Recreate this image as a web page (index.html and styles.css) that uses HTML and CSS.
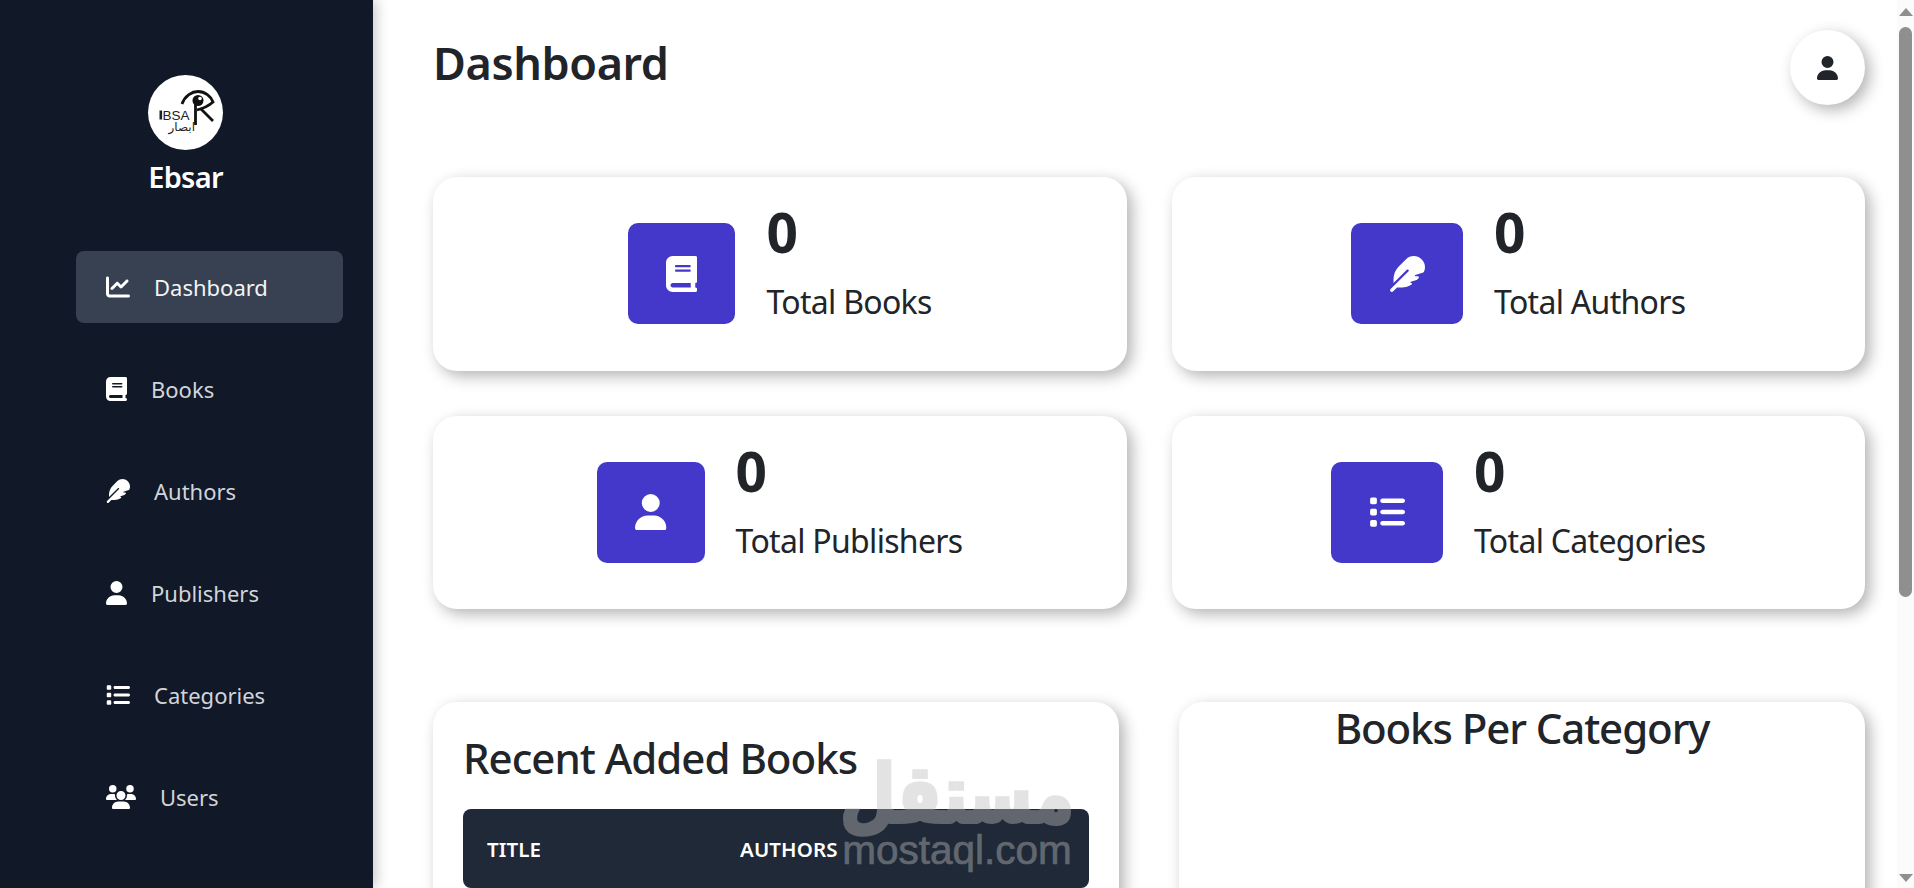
FILE: index.html
```html
<!DOCTYPE html>
<html>
    <head>
        <title>Ebsar Dashboard</title>
        <meta name="viewport" content="width=device-width, initial-scale=1.0">
        <link rel="stylesheet" href="styles.css">
    </head>
    <body>
    <!-- icon set, used with <use> below -->
    <svg class="icon-defs" aria-hidden="true">
        <symbol id="i-chart" viewBox="0 0 512 512"><path d="M64 64c0-17.7-14.3-32-32-32S0 46.3 0 64V400c0 44.2 35.8 80 80 80H480c17.7 0 32-14.3 32-32s-14.3-32-32-32H80c-8.8 0-16-7.2-16-16V64zm406.6 86.6c12.5-12.5 12.5-32.8 0-45.3s-32.8-12.5-45.3 0L320 210.7l-57.4-57.4c-12.5-12.5-32.8-12.5-45.3 0l-112 112c-12.5 12.5-12.5 32.8 0 45.3s32.8 12.5 45.3 0L240 221.3l57.4 57.4c12.5 12.5 32.8 12.5 45.3 0l128-128z"/></symbol>
        <symbol id="i-book" viewBox="0 0 448 512"><path d="M96 0C43 0 0 43 0 96V416c0 53 43 96 96 96H384h32c17.7 0 32-14.3 32-32s-14.3-32-32-32V384c17.7 0 32-14.3 32-32V32c0-17.7-14.3-32-32-32H384 96zm0 384H352v64H96c-17.7 0-32-14.3-32-32s14.3-32 32-32zm32-240c0-8.8 7.2-16 16-16H336c8.8 0 16 7.2 16 16s-7.2 16-16 16H144c-8.8 0-16-7.2-16-16zm16 48H336c8.8 0 16 7.2 16 16s-7.2 16-16 16H144c-8.8 0-16-7.2-16-16s7.2-16 16-16z"/></symbol>
        <symbol id="i-feather" viewBox="0 0 512 512"><path d="M278.5 215.6L23 471c-9.4 9.4-9.4 24.6 0 33.9s24.6 9.4 33.9 0l57-57h68c49.7 0 97.9-14.4 139-41c11.1-7.2 5.5-23-7.8-23c-5.1 0-9.2-4.1-9.2-9.2c0-4.1 2.7-7.6 6.5-8.8l81-24.3c2.5-.8 4.8-2.1 6.7-4l22.4-22.4c10.1-10.1 2.9-27.3-11.3-27.3l-32.2 0c-5.1 0-9.2-4.1-9.2-9.2c0-4.1 2.7-7.6 6.5-8.8l112-33.6c4-1.2 7.4-3.9 9.3-7.7C506.4 207.6 512 184.1 512 160c0-41-16.3-80.3-45.3-109.3l-5.5-5.5C432.3 16.3 393 0 352 0s-80.3 16.3-109.3 45.3L139 149C91 197 64 262.1 64 330v55.3L253.6 195.8c6.2-6.2 16.4-6.2 22.6 0c5.4 5.4 6.1 13.6 2.2 19.8z"/></symbol>
        <symbol id="i-user" viewBox="0 0 448 512"><path d="M224 256A128 128 0 1 0 224 0a128 128 0 1 0 0 256zm-45.7 48C79.8 304 0 383.8 0 482.3C0 498.7 13.3 512 29.7 512H418.3c16.4 0 29.7-13.3 29.7-29.7C448 383.8 368.2 304 269.7 304H178.3z"/></symbol>
        <symbol id="i-list" viewBox="0 0 512 512"><path d="M40 48C26.7 48 16 58.7 16 72v48c0 13.3 10.7 24 24 24H88c13.3 0 24-10.7 24-24V72c0-13.3-10.7-24-24-24H40zM192 64c-17.7 0-32 14.3-32 32s14.3 32 32 32H480c17.7 0 32-14.3 32-32s-14.3-32-32-32H192zm0 160c-17.7 0-32 14.3-32 32s14.3 32 32 32H480c17.7 0 32-14.3 32-32s-14.3-32-32-32H192zm0 160c-17.7 0-32 14.3-32 32s14.3 32 32 32H480c17.7 0 32-14.3 32-32s-14.3-32-32-32H192zM16 232v48c0 13.3 10.7 24 24 24H88c13.3 0 24-10.7 24-24V232c0-13.3-10.7-24-24-24H40c-13.3 0-24 10.7-24 24zM40 368c-13.3 0-24 10.7-24 24v48c0 13.3 10.7 24 24 24H88c13.3 0 24-10.7 24-24V392c0-13.3-10.7-24-24-24H40z"/></symbol>
        <symbol id="i-users" viewBox="0 0 640 512"><path d="M144 0a80 80 0 1 1 0 160A80 80 0 1 1 144 0zM512 0a80 80 0 1 1 0 160A80 80 0 1 1 512 0zM0 298.7C0 239.8 47.8 192 106.7 192h42.7c15.9 0 31 3.5 44.6 9.7c-1.3 7.2-1.9 14.7-1.9 22.3c0 38.2 16.8 72.5 43.3 96c-.2 0-.4 0-.7 0H21.3C9.6 320 0 310.4 0 298.7zM405.3 320c-.2 0-.4 0-.7 0c26.6-23.5 43.3-57.8 43.3-96c0-7.6-.7-15-1.9-22.3c13.6-6.3 28.7-9.7 44.6-9.7h42.7C592.2 192 640 239.8 640 298.7c0 11.8-9.6 21.3-21.3 21.3H405.3zM224 224a96 96 0 1 1 192 0 96 96 0 1 1 -192 0zM128 485.3C128 411.7 187.7 352 261.3 352H378.7C452.3 352 512 411.7 512 485.3c0 14.7-11.9 26.7-26.7 26.7H154.7c-14.7 0-26.7-11.9-26.7-26.7z"/></symbol>
    </svg>

    <div class="app">
        <aside class="sidebar">
            <div class="brand">
                <svg class="brand-logo" viewBox="0 0 75 75">
                    <circle cx="37.5" cy="37.5" r="37.5" fill="#fff"/>
                    <rect x="11.500" y="35.500" width="2.600" height="9" fill="#222"/>
                    <text class="logo-latin" x="14.500" y="44.500">BSA</text>
                    <text class="logo-arabic" x="47" y="56" text-anchor="end">ابصار</text>
                    <path d="M34 29C37 20.500 44 16.500 50 16.500C57 16.500 63 21.500 65 27C60 31.500 55 33.500 49 35" fill="none" stroke="#111" stroke-width="2.800"/>
                    <path d="M47.500 27V50M53 34L65 46" fill="none" stroke="#111" stroke-width="2.800"/>
                    <circle cx="50" cy="25.500" r="5.500" fill="#111"/>
                    <circle cx="52" cy="23.500" r="1.800" fill="#fff"/>
                </svg>
                <h2 class="brand-name">Ebsar</h2>
            </div>
            <nav class="nav">
                <a class="nav-item active"><svg class="nav-icon w24"><use href="#i-chart"/></svg>Dashboard</a>
                <a class="nav-item"><svg class="nav-icon w21"><use href="#i-book"/></svg>Books</a>
                <a class="nav-item"><svg class="nav-icon w24"><use href="#i-feather"/></svg>Authors</a>
                <a class="nav-item"><svg class="nav-icon w21"><use href="#i-user"/></svg>Publishers</a>
                <a class="nav-item"><svg class="nav-icon w24"><use href="#i-list"/></svg>Categories</a>
                <a class="nav-item"><svg class="nav-icon w30"><use href="#i-users"/></svg>Users</a>
            </nav>
        </aside>

        <main class="content">
            <header class="topbar">
                <h1 class="page-title">Dashboard</h1>
                <button class="profile-btn"><svg class="w21"><use href="#i-user"/></svg></button>
            </header>

            <section class="stats">
                <div class="card stat">
                    <div class="stat-icon"><svg class="tile-narrow"><use href="#i-book"/></svg></div>
                    <div><div class="stat-num">0</div><div class="stat-label">Total Books</div></div>
                </div>
                <div class="card stat">
                    <div class="stat-icon"><svg class="tile-wide"><use href="#i-feather"/></svg></div>
                    <div><div class="stat-num">0</div><div class="stat-label">Total Authors</div></div>
                </div>
                <div class="card stat">
                    <div class="stat-icon"><svg class="tile-narrow"><use href="#i-user"/></svg></div>
                    <div><div class="stat-num">0</div><div class="stat-label">Total Publishers</div></div>
                </div>
                <div class="card stat">
                    <div class="stat-icon"><svg class="tile-wide"><use href="#i-list"/></svg></div>
                    <div><div class="stat-num">0</div><div class="stat-label">Total Categories</div></div>
                </div>
            </section>

            <section class="panels">
                <div class="card panel">
                    <h2 class="panel-title">Recent Added Books</h2>
                    <div class="table-head">
                        <span class="col-title">TITLE</span>
                        <span>AUTHORS</span>
                    </div>
                </div>
                <div class="card panel-chart">
                    <h2 class="chart-title">Books Per Category</h2>
                </div>
            </section>
        </main>

        <div class="scrollbar">
            <span class="arrow-up"></span>
            <span class="thumb"></span>
            <span class="arrow-down"></span>
        </div>
    </div>

    <!-- site watermark lying over the page -->
    <div class="watermark">
        <div class="wm-ar" lang="ar" dir="rtl">مستقل</div>
        <div class="wm-en">mostaql.com</div>
    </div>
    </body>
</html>
```

FILE: styles.css
```css
*{
    box-sizing: border-box;
}

html, body{
    margin: 0;
    height: 100%;
    overflow: hidden;
}

body{
    background-color: #fff;
    color: #212529;
    font-family: "Noto Sans", sans-serif;
}

.icon-defs{
    display: none;
}

.w21{ width: 21px; height: 24px; }
.w24{ width: 24px; height: 24px; }
.w30{ width: 30px; height: 24px; }
.tile-narrow{ width: 31.500px; height: 36px; }
.tile-wide{ width: 36px; height: 36px; }

.app{
    display: flex;
    height: 100vh;
}

/* sidebar */
.sidebar{
    flex: none;
    width: 373px;
    background-color: #111827;
    box-shadow: 4px 0 12px rgba(0,0,0,.2);
    position: relative;
    padding-top: 75px;
}

.brand{
    display: flex;
    flex-direction: column;
    align-items: center;
    padding-right: 2px;
}

.brand-logo{
    width: 75px;
    height: 75px;
    display: block;
}

.logo-latin{
    font-family: "Liberation Sans", sans-serif;
    font-size: 13.500px;
    fill: #222;
}

.logo-arabic{
    font-family: "DejaVu Sans", sans-serif;
    font-size: 12px;
    fill: #222;
}

.brand-name{
    margin: 0;
    margin-top: 9px;
    color: #fff;
    font-size: 29px;
    line-height: 36px;
    font-weight: 600;
    letter-spacing: -.7px;
}

.nav{
    display: flex;
    flex-direction: column;
    gap: 30px;
    margin: 56px 30px 0 76px;
}

.nav-item{
    display: flex;
    align-items: center;
    gap: 24px;
    height: 72px;
    padding-left: 30px;
    border-radius: 8px;
    color: #d1d5db;
    font-size: 22px;
    letter-spacing: 0;
}

.nav-item.active{
    background-color: #374151;
    color: #f3f4f6;
}

.nav-icon{
    fill: #fff;
    flex: none;
}

/* main area */
.content{
    flex: 1;
    min-width: 0;
    padding: 0 32px 0 60px;
}

.topbar{
    display: flex;
    justify-content: space-between;
    align-items: flex-start;
    padding-top: 30px;
}

.page-title{
    margin: 0;
    margin-top: 3px;
    font-size: 45px;
    line-height: 60px;
    font-weight: 600;
    letter-spacing: -.4px;
}

.profile-btn{
    width: 75px;
    height: 75px;
    border: 0;
    border-radius: 50%;
    background-color: #fff;
    box-shadow: 5px 5px 15px rgba(0,0,0,.3);
    display: flex;
    align-items: center;
    justify-content: center;
    fill: #212529;
}

.card{
    background-color: #fff;
    border-radius: 24px;
    box-shadow: 5px 5px 15px rgba(0,0,0,.3);
}

.stats{
    display: grid;
    grid-template-columns: 1fr 1fr;
    gap: 45px;
    margin-top: 72px;
}

.stat{
    height: 193.500px;
    display: flex;
    align-items: center;
    justify-content: center;
    gap: 31px;
}

.stat-icon{
    flex: none;
    height: 101px;
    padding: 0 38px;
    border-radius: 10px;
    background-color: #4338ca;
    fill: #fff;
    display: flex;
    align-items: center;
}

.stat-num{
    font-size: 55px;
    line-height: 56px;
    font-weight: 700;
}

.stat-label{
    font-size: 32px;
    line-height: 83px;
    letter-spacing: -.7px;
}

.panels{
    display: grid;
    grid-template-columns: 1fr 1fr;
    gap: 60px;
    margin-top: 92.500px;
}

.panel{
    height: 400px;
    padding: 28px 30px;
}

.panel-title{
    margin: 0;
    font-size: 42px;
    line-height: 56px;
    font-weight: 500;
    letter-spacing: -1px;
}

.table-head{
    display: flex;
    align-items: center;
    height: 79px;
    margin-top: 23px;
    padding: 1px 0 0 24px;
    border-radius: 8px;
    background-color: #1f2937;
    color: #fff;
    font-size: 20.500px;
    font-weight: 600;
    letter-spacing: .1px;
}

.col-title{
    width: 253px;
}

.panel-chart{
    height: 400px;
}

.chart-title{
    margin: 0;
    text-align: center;
    font-size: 42px;
    line-height: 52px;
    font-weight: 500;
    letter-spacing: -1.100px;
}

/* drawn scrollbar */
.scrollbar{
    flex: none;
    width: 17px;
    background-color: #fbfbfb;
    display: flex;
    flex-direction: column;
    align-items: center;
    padding: 8px 0 6px;
}

.arrow-up{
    border: 7px solid transparent;
    border-top: 0;
    border-bottom: 8px solid #8f8f8f;
}

.arrow-down{
    border: 7px solid transparent;
    border-bottom: 0;
    border-top: 8px solid #8f8f8f;
    margin-top: auto;
}

.thumb{
    width: 13px;
    height: 570px;
    margin-top: 11px;
    border-radius: 7px;
    background-color: #8f8f8f;
}

.watermark{
    position: absolute;
    left: 840px;
    top: 765px;
    width: 234px;
    color: #bebebe;
    opacity: .42;
    text-align: center;
    pointer-events: none;
}

.wm-ar{
    font-family: "DejaVu Sans", sans-serif;
    font-size: 64px;
    line-height: 58px;
    font-weight: 700;
    -webkit-text-stroke: 3px #bebebe;
    transform: scaleY(1.25);
}

.wm-en{
    margin-top: 15px;
    font-family: "Liberation Sans", sans-serif;
    font-size: 40.500px;
    line-height: 24px;
    -webkit-text-stroke: .7px #bebebe;
}
```
